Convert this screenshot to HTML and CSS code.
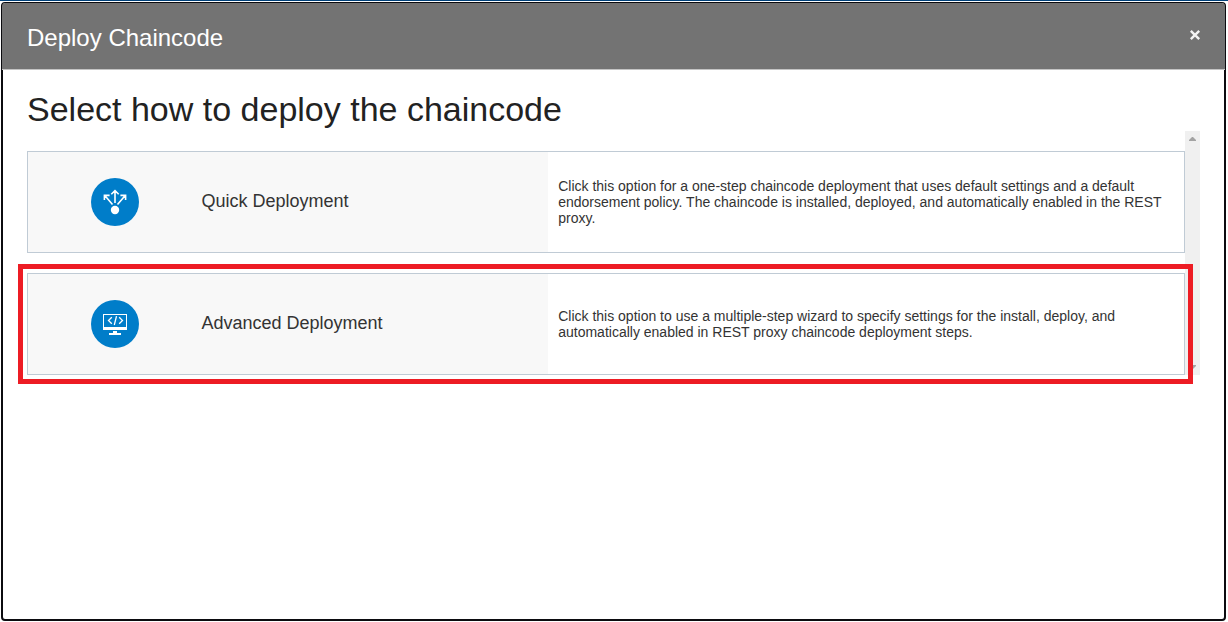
FILE: index.html
```html
<!DOCTYPE html>
<html lang="en">
<head>
<meta charset="utf-8">
<meta name="viewport" content="width=device-width, initial-scale=1">
<title>Deploy Chaincode</title>
<link rel="stylesheet" href="styles.css">
</head>
<body>
<div class="dialog" role="dialog" aria-labelledby="dialog-title">
  <header class="dialog-header">
    <h1 class="dialog-title" id="dialog-title">Deploy Chaincode</h1>
    <button class="close" type="button" aria-label="Close">
      <svg width="12" height="12" viewBox="0 0 12 12" aria-hidden="true"><path d="M1.8 1.8l8.4 8.4M10.2 1.8l-8.4 8.4" fill="none" stroke="#f4f4f4" stroke-width="2.4"/></svg>
    </button>
  </header>
  <main class="dialog-body">
    <h2 class="heading">Select how to deploy the chaincode</h2>
    <div class="scroller">
      <div class="options">
        <button class="option" type="button">
          <span class="option-icon">
            <svg width="48" height="48" viewBox="0 0 48 48" aria-hidden="true">
              <circle cx="24" cy="24" r="24" fill="#007dc9"/>
              <circle cx="24" cy="32" r="4.2" fill="#fff"/>
              <path d="M24 25V13M20.3 16.3L24 12.7l3.7 3.6M21.5 26.5L13.8 17.6M13.4 22v-4.6h5.2M26.5 26.5l7.7-8.9M34.6 22v-4.6h-5.2" fill="none" stroke="#fff" stroke-width="1.6"/>
            </svg>
          </span>
          <span class="option-name">Quick Deployment</span>
          <span class="option-text">Click this option for a one-step chaincode deployment that uses default settings and a default endorsement policy. The chaincode is installed, deployed, and automatically enabled in the REST proxy.</span>
        </button>
        <button class="option marked" type="button">
          <span class="option-icon">
            <svg width="48" height="48" viewBox="0 0 48 48" aria-hidden="true">
              <circle cx="24" cy="24" r="24" fill="#007dc9"/>
              <path d="M12 14h24v16H12zM13 15v12h22V15zM22 31h4v2h4v2H18v-2h4z" fill="#fff" fill-rule="evenodd"/>
              <path d="M20.8 17.2L17.5 20.5l3.3 3.3M28.2 17.2l3.3 3.3-3.3 3.3M25.5 16.2l-2.2 8.8" fill="none" stroke="#fff" stroke-width="1.3"/>
            </svg>
          </span>
          <span class="option-name">Advanced Deployment</span>
          <span class="option-text">Click this option to use a multiple-step wizard to specify settings for the install, deploy, and automatically enabled in REST proxy chaincode deployment steps.</span>
        </button>
      </div>
      <div class="scrollbar" aria-hidden="true">
        <svg width="7" height="4" viewBox="0 0 7 4"><path d="M0 4V3L3 0h1l3 3v1z" fill="#a3a3a3"/></svg>
        <svg width="7" height="4" viewBox="0 0 7 4"><path d="M0 0v1l3 3h1l3-3V0z" fill="#a3a3a3"/></svg>
      </div>
    </div>
  </main>
</div>
</body>
</html>
```
FILE: styles.css
```css
* {
  box-sizing: border-box;
}

body {
  display: flex;
  min-height: 100vh;
  margin: 0;
  padding: 1px 2px 1px 1px;
  border-top: 1px solid #00417a;
  background: #fff;
  color: #333;
  font-family: "Liberation Sans", Arial, sans-serif;
}

.dialog {
  flex: 1;
  border: 2px solid #0b0b0f;
  border-top-width: 1px;
  border-radius: 4px;
  background: #fff;
}

.dialog-header {
  display: flex;
  align-items: center;
  justify-content: space-between;
  margin: 0 -1px;
  padding: 21px 24px 17px 25px;
  border-bottom: 1px solid #c4c4c4;
  border-radius: 3px 3px 0 0;
  background: #737373;
}

.dialog-title {
  margin: 0;
  color: #fff;
  font-size: 24px;
  font-weight: 400;
  line-height: 28px;
}

.close {
  display: flex;
  margin-bottom: 6px;
  padding: 0;
  border: 0;
  background: none;
}

.dialog-body {
  padding: 19px 24px;
}

.heading {
  margin: 0;
  padding-bottom: 2px;
  color: #222;
  font-size: 34px;
  font-weight: 400;
  line-height: 40px;
}

.scroller {
  display: flex;
}

.options {
  display: flex;
  flex: 1;
  flex-direction: column;
  gap: 20px;
  padding-top: 20px;
}

.option {
  position: relative;
  display: grid;
  grid-template-columns: 15% 30% 55%;
  min-height: 102px;
  padding: 0;
  border: 1px solid #c0cbd5;
  background: #f8f8f8;
  color: #333;
  font-family: inherit;
  text-align: left;
}

.option-icon,
.option-name,
.option-text {
  display: flex;
  align-items: center;
}

.option-icon {
  justify-content: center;
}

.option-name {
  padding-bottom: 2px;
  font-size: 18px;
}

.option-text {
  padding: 0 10px;
  background: #fff;
  font-size: 14px;
  line-height: 16px;
}

.marked::after {
  position: absolute;
  inset: -10px -9px -10px -10px;
  border: 5px solid #ed1c24;
  content: "";
}

.scrollbar {
  display: flex;
  flex-direction: column;
  align-items: center;
  justify-content: space-between;
  width: 15px;
  padding: 6px 0;
  background: #f0f0f0;
}
```
